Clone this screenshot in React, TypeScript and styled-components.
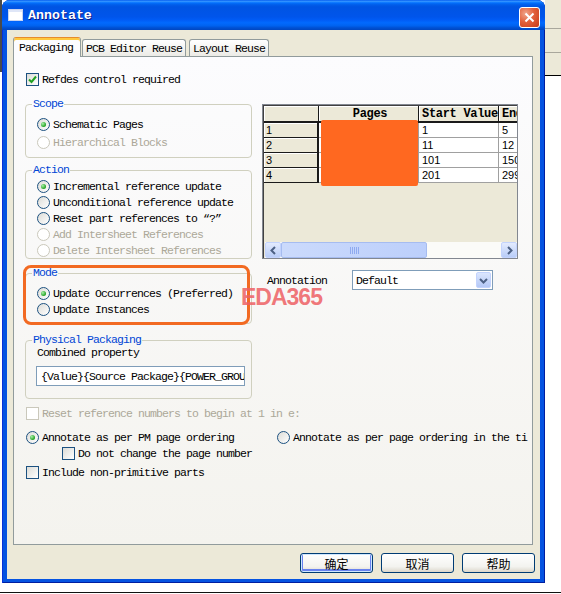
import React from 'react';
import styled, { createGlobalStyle, css } from 'styled-components';

const GlobalStyle = createGlobalStyle`
  html, body { margin: 0; padding: 0; background: #fff; }
  *, *::before, *::after { box-sizing: border-box; }
`;

const uiFont = css`
  font-family: "Liberation Mono", "Noto Sans CJK SC", monospace;
  font-size: 11.5px;
  letter-spacing: -0.9px;
`;

const Desktop = styled.div`
  display: flex;
  width: 561px;
  height: 593px;
  border-bottom: 1px solid #111;
  background: #fff;
`;

const LeftEdge = styled.div`
  width: 2px;
  background: linear-gradient(#4a4a4a 0 72px, #fff 72px);
`;

const RightEdge = styled.div`
  flex: 1;
  background: linear-gradient(
    #ece9d8 0 28px, #a9a79c 28px 29px, #ece9d8 29px 52px, #a9a79c 52px 53px,
    #ece9d8 53px 75px, #000 75px 76px, #fff 76px
  );
`;

const Window = styled.div`
  width: 543px;
  height: 583px;
  display: flex;
  flex-direction: column;
  padding: 0 5px 4px;
  background: #0553e1;
  border-radius: 8px 8px 0 0;
  box-shadow: inset 1px 0 #0831d9, inset -1px 0 #001ea0, inset 0 -1px #001ea0;
`;

const TitleBar = styled.div`
  height: 30px;
  margin: 0 -5px;
  padding: 0 5px 0 6px;
  display: flex;
  align-items: center;
  border-radius: 8px 8px 0 0;
  background: linear-gradient(
    to bottom, #0058ee 0%, #3593ff 4%, #288eff 6%, #127dff 8%, #036ffc 10%,
    #0262ee 14%, #0057e5 20%, #0054e3 24%, #0055eb 56%, #005bf5 66%,
    #026afe 76%, #0062ef 86%, #0052d6 92%, #0046c0 100%
  );
`;

const TitleText = styled.span`
  margin-left: 5px;
  color: #fff;
  font-family: "Liberation Mono", monospace;
  font-weight: bold;
  font-size: 13.3px;
  text-shadow: 1px 1px #0a1883;
`;

const CloseButton = styled.div`
  margin-left: auto;
  width: 21px;
  height: 21px;
  margin-top: 4px;
  border: 1px solid #fff;
  border-radius: 3px;
  display: flex;
  align-items: center;
  justify-content: center;
  background: radial-gradient(circle at 30% 30%, #f0a68c 0%, #e2603b 45%, #c73a16 100%);
`;

const Client = styled.div`
  flex: 1;
  display: flex;
  flex-direction: column;
  padding: 7px 5px 6px 6px;
  background: #ece9d8;
`;

const TabStrip = styled.div`
  height: 19px;
  display: flex;
  align-items: flex-end;
  position: relative;
  z-index: 1;
`;

const Tab = styled.div<{ $active?: boolean; $ml?: number }>`
  ${uiFont}
  color: #000;
  margin-left: ${p => p.$ml ?? 0}px;
  display: flex;
  align-items: center;
  border: 1px solid #919b9c;
  border-radius: 3px 3px 0 0;
  ${p =>
    p.$active
      ? css`
          height: 20px;
          margin-bottom: -1px;
          padding: 0 7px 1px 5px;
          border-bottom: none;
          border-top-color: #e68b2c;
          background: #fcfcfe;
          box-shadow: inset 0 2px #ffc83c;
        `
      : css`
          height: 17px;
          padding: 0 3px;
          border-bottom: none;
          background: linear-gradient(#ffffff, #ecebe6);
        `}
`;

const Panel = styled.div`
  flex: 1;
  position: relative;
  overflow: hidden;
  margin-right: 2px;
  padding: 16px 0 0 11px;
  border: 1px solid #919b9c;
  background: linear-gradient(#fcfcfe, #f4f3ee);
`;

const Row = styled.label<{ $h?: number; $mt?: number; $pl?: number; $disabled?: boolean }>`
  ${uiFont}
  display: flex;
  align-items: center;
  gap: 3px;
  height: ${p => p.$h ?? 13}px;
  margin-top: ${p => p.$mt ?? 0}px;
  padding-left: ${p => p.$pl ?? 0}px;
  color: ${p => (p.$disabled ? '#aca899' : '#000')};
  white-space: nowrap;
`;

const Box = styled.span<{ $disabled?: boolean }>`
  flex: none;
  width: 13px;
  height: 13px;
  display: flex;
  align-items: center;
  justify-content: center;
  border: 1px solid ${p => (p.$disabled ? '#cac8bb' : '#1c5180')};
  background: ${p => (p.$disabled ? '#fff' : 'linear-gradient(135deg, #dcdcd7, #fff)')};
`;

const Circle = styled.span<{ $disabled?: boolean; $on?: boolean }>`
  flex: none;
  position: relative;
  width: 13px;
  height: 13px;
  border-radius: 50%;
  border: 1px solid ${p => (p.$disabled ? '#cac8bb' : '#1c5180')};
  background: ${p => (p.$disabled ? '#fff' : 'linear-gradient(135deg, #dcdcd7, #fff)')};

  &::after {
    content: '';
    display: ${p => (p.$on ? 'block' : 'none')};
    position: absolute;
    left: 3px;
    top: 3px;
    width: 5px;
    height: 5px;
    border-radius: 50%;
    background: radial-gradient(circle at 35% 35%, #a8f0a8, #21a121 70%);
  }
`;

const Columns = styled.div`
  display: flex;
  gap: 10px;
  margin-top: 12px;
`;

const LeftCol = styled.div`
  width: 227px;
  display: flex;
  flex-direction: column;
`;

const RightCol = styled.div`
  width: 256px;
  display: flex;
  flex-direction: column;
`;

const Fieldset = styled.fieldset<{ $h: number; $mt?: number }>`
  margin: ${p => p.$mt ?? 0}px 0 0;
  padding: 0;
  min-width: 0;
  height: ${p => p.$h}px;
  border: 1px solid #d0d0bf;
  border-radius: 4px;
`;

const Legend = styled.legend`
  ${uiFont}
  margin-left: 6px;
  padding: 0 1px;
  line-height: 12px;
  color: #0046d5;
`;

const GroupBody = styled.div<{ $pt: number }>`
  padding: ${p => p.$pt}px 0 0 11px;
  display: flex;
  flex-direction: column;
`;

const Highlight = styled.div`
  position: relative;
  margin-top: 8px;

  &::after {
    content: '';
    position: absolute;
    inset: -2px 2px -1px -2px;
    border: 3px solid #f26a22;
    border-radius: 8px;
  }
`;

const Watermark = styled.div`
  position: absolute;
  left: 227px;
  top: 229px;
  font-family: "Liberation Sans", Arial, sans-serif;
  font-weight: bold;
  font-size: 23px;
  line-height: 1;
  letter-spacing: -1px;
  color: rgba(238, 96, 100, 0.85);
  z-index: 2;
`;

const TextInput = styled.div`
  ${uiFont}
  width: 209px;
  height: 20px;
  margin: 7px 0 0 -1px;
  padding-left: 4px;
  display: flex;
  align-items: center;
  overflow: hidden;
  white-space: nowrap;
  border: 1px solid #7f9db9;
  background: #fff;
`;

const Grid = styled.div`
  position: relative;
  margin-top: 6px;
  height: 155px;
  display: flex;
  flex-direction: column;
  overflow: hidden;
  border: 1px solid #828790;
  box-shadow: inset 1px 1px #404040;
  background: #ece9d8;
`;

const Table = styled.div`
  display: grid;
  grid-template-columns: 55px 100px 80px 60px;
  grid-template-rows: 17px repeat(4, 15px);
  margin: 1px 0 0 1px;
`;

const HeadCell = styled.div<{ $center?: boolean }>`
  font-family: "Liberation Mono", monospace;
  font-weight: bold;
  font-size: 12px;
  letter-spacing: -0.3px;
  display: flex;
  align-items: center;
  justify-content: ${p => (p.$center ? 'center' : 'flex-start')};
  padding-left: 3px;
  overflow: hidden;
  white-space: nowrap;
  background: #ece9d8;
  border-right: 1px solid #1a1a1a;
  border-bottom: 2px solid #1a1a1a;
  box-shadow: inset 1px 1px #fff;
`;

const RowHead = styled.div`
  font-family: "Liberation Sans", sans-serif;
  font-size: 11px;
  display: flex;
  align-items: center;
  padding-left: 2px;
  background: #ece9d8;
  border-right: 2px solid #1a1a1a;
  border-bottom: 1px solid #1a1a1a;
  box-shadow: inset 1px 1px #fff;
`;

const Cell = styled.div`
  font-family: "Liberation Sans", sans-serif;
  font-size: 11px;
  display: flex;
  align-items: center;
  padding-left: 3px;
  overflow: hidden;
  background: #fff;
  border-right: 1px solid #a0a0a0;
  border-bottom: 1px solid #a0a0a0;
`;

const Redaction = styled.div`
  position: absolute;
  left: 58px;
  top: 15px;
  width: 97px;
  height: 66px;
  border-radius: 2px;
  background: #ff6820;
`;

const Filler = styled.div`
  flex: 1;
`;

const ScrollBar = styled.div`
  height: 16px;
  margin: 0 0 0 2px;
  display: flex;
  background: #fbfbf8;
`;

const ArrowBtn = styled.div`
  width: 16px;
  height: 16px;
  flex: none;
  display: flex;
  align-items: center;
  justify-content: center;
  border: 1px solid #c3d3fd;
  border-radius: 2px;
  background: linear-gradient(#e3ebfe, #b9cdf8);
`;

const Thumb = styled.div`
  width: 146px;
  height: 16px;
  display: flex;
  align-items: center;
  justify-content: center;
  border: 1px solid #a6bcf0;
  border-radius: 2px;
  background: linear-gradient(90deg, #cbdafc, #bccffb);
`;

const Track = styled.div`
  flex: 1;
`;

const AnnotRow = styled.div`
  display: flex;
  align-items: center;
  height: 20px;
  margin-top: 11px;
`;

const FieldLabel = styled.span`
  ${uiFont}
  width: 90px;
  padding-left: 5px;
`;

const Select = styled.div`
  ${uiFont}
  width: 141px;
  height: 20px;
  display: flex;
  align-items: center;
  padding: 1px 1px 1px 3px;
  border: 1px solid #7f9db9;
  background: #fff;
`;

const DropBtn = styled.div`
  margin-left: auto;
  width: 15px;
  height: 16px;
  display: flex;
  align-items: center;
  justify-content: center;
  border-radius: 2px;
  border: 1px solid #c3d3fd;
  background: linear-gradient(#dbe6fe, #b4c8f6);
`;

const OrderRow = styled.div`
  display: grid;
  grid-template-columns: 251px auto;
  margin: 11px 0 0 1px;
`;

const Footer = styled.div`
  display: flex;
  justify-content: flex-end;
  gap: 8px;
  margin-top: 8px;
`;

const Button = styled.div<{ $default?: boolean }>`
  width: 73px;
  height: 20px;
  display: flex;
  align-items: center;
  justify-content: center;
  font-family: "Noto Sans CJK SC", sans-serif;
  font-size: 12px;
  color: #000;
  border: 1px solid #003c74;
  border-radius: 3px;
  background: linear-gradient(#ffffff, #f3f3ef 70%, #dcd7cb);
  box-shadow: ${p =>
    p.$default ? 'inset 0 0 0 1px #cee7ff, inset 0 -1px 0 2px #6982ee' : 'none'};
`;

const Check = () => (
  <svg width="9" height="9" viewBox="0 0 9 9">
    <path d="M1 4.5 L3.5 7 L8 1.5" fill="none" stroke="#21a121" strokeWidth="2" />
  </svg>
);

const Chevron = ({ dir }: { dir: 'left' | 'right' | 'down' }) => {
  const d =
    dir === 'left' ? 'M6 1 L2.5 4.5 L6 8' : dir === 'right' ? 'M3 1 L6.5 4.5 L3 8' : 'M1 3 L4.5 6.5 L8 3';
  return (
    <svg width="9" height="9" viewBox="0 0 9 9">
      <path d={d} fill="none" stroke="#4d6185" strokeWidth="2" />
    </svg>
  );
};

const Grip = () => (
  <svg width="9" height="7" viewBox="0 0 9 7">
    {[0.5, 2.5, 4.5, 6.5, 8.5].map(x => (
      <line key={x} x1={x} y1="0" x2={x} y2="7" stroke="#8faaf0" strokeWidth="1" />
    ))}
  </svg>
);

type Opt = { text: string; on?: boolean; disabled?: boolean };

const scope: Opt[] = [
  { text: 'Schematic Pages', on: true },
  { text: 'Hierarchical Blocks', disabled: true },
];

const action: Opt[] = [
  { text: 'Incremental reference update', on: true },
  { text: 'Unconditional reference update' },
  { text: 'Reset part references to “?”' },
  { text: 'Add Intersheet References', disabled: true },
  { text: 'Delete Intersheet References', disabled: true },
];

const mode: Opt[] = [
  { text: 'Update Occurrences (Preferred)', on: true },
  { text: 'Update Instances' },
];

const rows = [
  ['1', '1', '5'],
  ['2', '11', '12'],
  ['3', '101', '150'],
  ['4', '201', '299'],
];

const RadioList = ({ items, h }: { items: Opt[]; h: number }) => (
  <>
    {items.map(o => (
      <Row key={o.text} $h={h} $disabled={o.disabled}>
        <Circle $on={o.on} $disabled={o.disabled} />
        {o.text}
      </Row>
    ))}
  </>
);

export default function App() {
  return (
    <>
      <GlobalStyle />
      <Desktop>
        <LeftEdge />
        <Window>
          <TitleBar>
            <svg width="15" height="12" viewBox="0 0 15 12">
              <rect x="0.5" y="0.5" width="14" height="11" fill="#fff" stroke="#c8d4f0" />
              <rect x="1" y="1" width="13" height="2" fill="#dfe6f7" />
            </svg>
            <TitleText>Annotate</TitleText>
            <CloseButton>
              <svg width="11" height="11" viewBox="0 0 11 11">
                <path d="M1.5 1.5 L9.5 9.5 M9.5 1.5 L1.5 9.5" stroke="#fff" strokeWidth="2" />
              </svg>
            </CloseButton>
          </TitleBar>
          <Client>
            <TabStrip>
              <Tab $active>Packaging</Tab>
              <Tab $ml={1}>PCB Editor Reuse</Tab>
              <Tab $ml={3}>Layout Reuse</Tab>
            </TabStrip>
            <Panel>
              <Row $pl={1}>
                <Box>
                  <Check />
                </Box>
                Refdes control required
              </Row>
              <Columns>
                <LeftCol>
                  <Fieldset $h={60}>
                    <Legend>Scope</Legend>
                    <GroupBody $pt={5}>
                      <RadioList items={scope} h={18} />
                    </GroupBody>
                  </Fieldset>
                  <Fieldset $h={95} $mt={6}>
                    <Legend>Action</Legend>
                    <GroupBody $pt={2}>
                      <RadioList items={action} h={16} />
                    </GroupBody>
                  </Fieldset>
                  <Highlight>
                    <Fieldset $h={57}>
                      <Legend>Mode</Legend>
                      <GroupBody $pt={6}>
                        <RadioList items={mode} h={16} />
                      </GroupBody>
                    </Fieldset>
                  </Highlight>
                  <Fieldset $h={65} $mt={10}>
                    <Legend>Physical Packaging</Legend>
                    <GroupBody $pt={0}>
                      <Row>Combined property</Row>
                      <TextInput>{'{Value}{Source Package}{POWER_GROUP}'}</TextInput>
                    </GroupBody>
                  </Fieldset>
                </LeftCol>
                <RightCol>
                  <Grid>
                    <Table>
                      <HeadCell />
                      <HeadCell $center>Pages</HeadCell>
                      <HeadCell>Start Value</HeadCell>
                      <HeadCell>End Value</HeadCell>
                      {rows.map(r => (
                        <React.Fragment key={r[0]}>
                          <RowHead>{r[0]}</RowHead>
                          <Cell />
                          <Cell>{r[1]}</Cell>
                          <Cell>{r[2]}</Cell>
                        </React.Fragment>
                      ))}
                    </Table>
                    <Filler />
                    <ScrollBar>
                      <ArrowBtn>
                        <Chevron dir="left" />
                      </ArrowBtn>
                      <Thumb>
                        <Grip />
                      </Thumb>
                      <Track />
                      <ArrowBtn>
                        <Chevron dir="right" />
                      </ArrowBtn>
                    </ScrollBar>
                    <Redaction />
                  </Grid>
                  <AnnotRow>
                    <FieldLabel>Annotation</FieldLabel>
                    <Select>
                      Default
                      <DropBtn>
                        <Chevron dir="down" />
                      </DropBtn>
                    </Select>
                  </AnnotRow>
                </RightCol>
              </Columns>
              <Row $mt={8} $pl={1} $disabled>
                <Box $disabled />
                Reset reference numbers to begin at 1 in e:
              </Row>
              <OrderRow>
                <Row>
                  <Circle $on />
                  Annotate as per PM page ordering
                </Row>
                <Row>
                  <Circle />
                  Annotate as per page ordering in the ti
                </Row>
              </OrderRow>
              <Row $mt={3} $pl={37}>
                <Box />
                Do not change the page number
              </Row>
              <Row $mt={6} $pl={1}>
                <Box />
                Include non-primitive parts
              </Row>
              <Watermark>EDA365</Watermark>
            </Panel>
            <Footer>
              <Button $default>确定</Button>
              <Button>取消</Button>
              <Button>帮助</Button>
            </Footer>
          </Client>
        </Window>
        <RightEdge />
      </Desktop>
    </>
  );
}
